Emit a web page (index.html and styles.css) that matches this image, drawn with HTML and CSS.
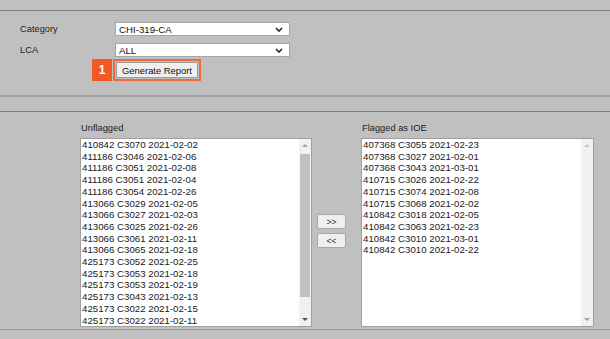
FILE: index.html
```html
<!DOCTYPE html>
<html>
<head>
  <meta charset="UTF-8">
  <title>IOE Report</title>
  <link rel="stylesheet" href="styles.css">
</head>
<body>
  <div class="topbar"></div>

  <div class="filters">
    <div class="row">
      <label class="label">Category</label>
      <div class="select">
        <span>CHI-319-CA</span>
        <svg class="chev" width="8" height="5" viewBox="0 0 8 5"><path d="M1 1 L4 4 L7 1" fill="none" stroke="#222" stroke-width="1.6"/></svg>
      </div>
    </div>
    <div class="row">
      <label class="label">LCA</label>
      <div class="select">
        <span>ALL</span>
        <svg class="chev" width="8" height="5" viewBox="0 0 8 5"><path d="M1 1 L4 4 L7 1" fill="none" stroke="#222" stroke-width="1.6"/></svg>
      </div>
    </div>
    <div class="row">
      <div class="label"></div>
      <div class="marked">
        <span class="badge">1</span>
        <button class="btn">Generate Report</button>
      </div>
    </div>
  </div>

  <div class="divider"></div>

  <div class="lists">
    <div class="list-label">Unflagged</div>
    <div></div>
    <div class="list-label">Flagged as IOE</div>

    <div class="listbox">
      <div class="items">
        <div>410842 C3070 2021-02-02</div>
        <div>411186 C3046 2021-02-06</div>
        <div>411186 C3051 2021-02-08</div>
        <div>411186 C3051 2021-02-04</div>
        <div>411186 C3054 2021-02-26</div>
        <div>413066 C3029 2021-02-05</div>
        <div>413066 C3027 2021-02-03</div>
        <div>413066 C3025 2021-02-26</div>
        <div>413066 C3061 2021-02-11</div>
        <div>413066 C3065 2021-02-18</div>
        <div>425173 C3052 2021-02-25</div>
        <div>425173 C3053 2021-02-18</div>
        <div>425173 C3053 2021-02-19</div>
        <div>425173 C3043 2021-02-13</div>
        <div>425173 C3022 2021-02-15</div>
        <div>425173 C3022 2021-02-11</div>
      </div>
      <div class="scrollbar">
        <span class="arrow up"></span>
        <span class="track"><span class="thumb"></span></span>
        <span class="arrow down"></span>
      </div>
    </div>

    <div class="movers">
      <button class="move">&gt;&gt;</button>
      <button class="move">&lt;&lt;</button>
    </div>

    <div class="listbox">
      <div class="items">
        <div>407368 C3055 2021-02-23</div>
        <div>407368 C3027 2021-02-01</div>
        <div>407368 C3043 2021-03-01</div>
        <div>410715 C3026 2021-02-22</div>
        <div>410715 C3074 2021-02-08</div>
        <div>410715 C3068 2021-02-02</div>
        <div>410842 C3018 2021-02-05</div>
        <div>410842 C3063 2021-02-23</div>
        <div>410842 C3010 2021-03-01</div>
        <div>410842 C3010 2021-02-22</div>
      </div>
      <div class="scrollbar disabled">
        <span class="arrow up"></span>
        <span class="track"></span>
        <span class="arrow down"></span>
      </div>
    </div>
  </div>
</body>
</html>
```

FILE: styles.css
```css
body {
  margin: 0;
  background: #c0c0c0;
  font-family: "Liberation Sans", Arial, sans-serif;
  color: #222;
}
.topbar {
  height: 10px;
  border-bottom: 1px solid #808080;
}
.filters {
  padding: 11px 0 14px 20px;
  display: flex;
  flex-direction: column;
  gap: 7px;
}
.row {
  display: flex;
  align-items: center;
}
.row:last-child {
  margin-top: -5px;
}
.label {
  width: 95px;
  font-size: 9.3px;
}
.select {
  width: 175px;
  height: 14px;
  box-sizing: border-box;
  background: #fff;
  border: 1px solid #a6a6a6;
  display: flex;
  align-items: center;
  justify-content: space-between;
  padding: 0 6px 0 3px;
  font-size: 9.7px;
  color: #111;
}
.chev {
  display: block;
}
.marked {
  position: relative;
  margin-left: -2px;
  border: 2px solid #ef6b3a;
  padding: 1px;
  height: 22px;
  box-sizing: border-box;
  display: flex;
}
.badge {
  position: absolute;
  left: -23px;
  top: -2px;
  width: 20px;
  height: 22px;
  background: #f15a24;
  color: #fff;
  font-weight: bold;
  font-size: 12px;
  display: flex;
  align-items: center;
  justify-content: center;
}
.btn {
  font-family: inherit;
  font-size: 9.4px;
  color: #111;
  background: #efefef;
  border: 1px solid #9a9a9a;
  border-radius: 1px;
  padding: 0 5px;
  height: 16px;
  width: 82px;
  margin: 0;
}
.divider {
  height: 2px;
  background: #a4a4a4;
  margin-bottom: 14px;
}
.lists {
  border-top: 1px solid #808080;
  border-bottom: 1px solid #9a9a9a;
  padding: 11px 0 2px 80px;
  display: grid;
  grid-template-columns: 232px 49px 233px;
  grid-template-rows: auto 189px;
}
.list-label {
  font-size: 9.3px;
  line-height: 10px;
  margin-bottom: 5px;
  padding-left: 1px;
}
.listbox {
  background: #fff;
  border: 1px solid #a0a0a0;
  display: flex;
  overflow: hidden;
}
.items {
  flex: 1;
  font-size: 9.7px;
  line-height: 11.7px;
  padding: 0 0 0 1px;
  color: #1a1a1a;
}
.scrollbar {
  width: 12px;
  background: #f1f1f1;
  display: flex;
  flex-direction: column;
  align-items: center;
}
.arrow {
  width: 0;
  height: 0;
  border-left: 3px solid transparent;
  border-right: 3px solid transparent;
  margin: 5px 0;
}
.arrow.up {
  border-bottom: 3px solid #a3a3a3;
}
.arrow.down {
  border-top: 3px solid #505050;
}
.disabled .arrow.down {
  border-top-color: #a3a3a3;
}
.disabled .arrow.up {
  border-bottom-color: #c8c8c8;
}
.track {
  flex: 1;
  width: 100%;
  padding-top: 2px;
  box-sizing: border-box;
}
.thumb {
  display: block;
  margin: 0 auto;
  width: 10px;
  height: 143px;
  background: #c1c1c1;
}
.movers {
  display: flex;
  flex-direction: column;
  justify-content: center;
  gap: 4px;
  padding: 0 0 3px 5px;
}
.move {
  width: 29px;
  height: 15px;
  padding: 0;
  margin: 0;
  font-family: inherit;
  font-size: 8.5px;
  color: #333;
  background: #efefef;
  border: 1px solid #a8a8a8;
  border-radius: 2px;
}
```
